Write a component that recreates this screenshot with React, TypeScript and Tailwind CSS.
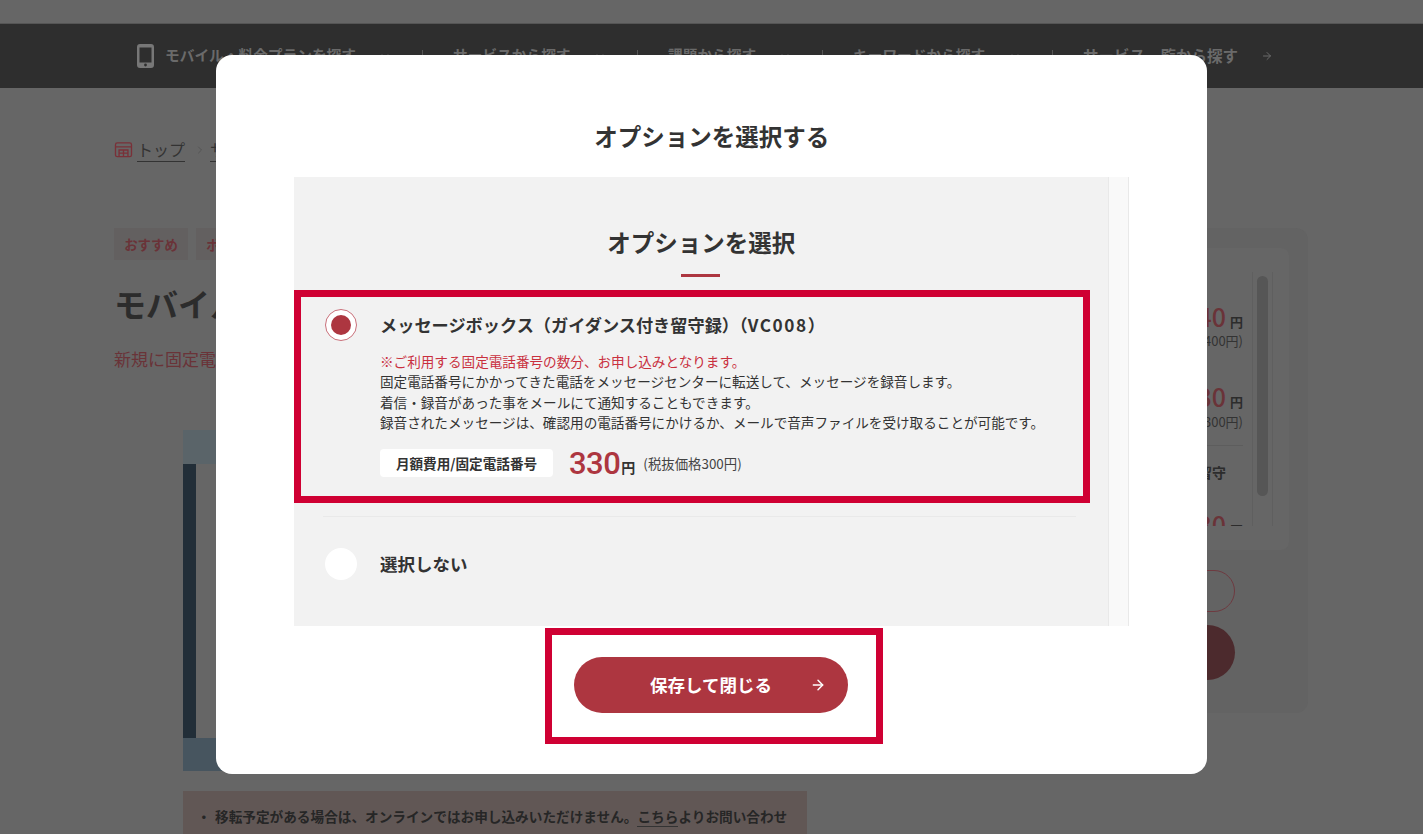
import React from "react";
import { ArrowRight, ChevronDown, ChevronRight } from "lucide-react";

const FONT = { fontFamily: '"Noto Sans CJK JP", "Noto Sans", sans-serif' };

const navItems = [
  { label: "モバイル・料金プランを探す", w: "w-[191px]" },
  { label: "サービスから探す", w: "w-[118px]" },
  { label: "課題から探す", w: "w-[88px]" },
  { label: "キーワードから探す", w: "w-[133px]" },
];

function BackgroundPage() {
  return (
    <div className="h-[834px] overflow-hidden bg-[#666666]">
      <div className="h-6 border-b border-[#555555]" />
      <nav className="flex h-16 items-center bg-[#2e2e2e] pl-[137px] pb-[1px] text-[14.7px] font-bold text-[#6a6a6a]">
        <svg viewBox="0 0 17 24" className="mr-[11px] h-6 w-[17px] text-[#777777]" fill="currentColor">
          <path
            fillRule="evenodd"
            d="M3 0h11a3 3 0 0 1 3 3v18a3 3 0 0 1-3 3H3a3 3 0 0 1-3-3V3a3 3 0 0 1 3-3zM2.5 3.5v15h12v-15zM8.5 19.6a1.4 1.4 0 1 0 0 2.8 1.4 1.4 0 0 0 0-2.8z"
          />
        </svg>
        {navItems.map((item) => (
          <React.Fragment key={item.label}>
            <span className={`${item.w} whitespace-nowrap`}>{item.label}</span>
            <ChevronDown className="ml-[23px] h-3 w-3 text-[#555555]" />
            <span className="ml-[31px] mr-[30px] h-3 w-px bg-[#555555]" />
          </React.Fragment>
        ))}
        <span className="w-[155px] whitespace-nowrap text-[15.5px]">サービス一覧から探す</span>
        <ArrowRight className="ml-[23px] h-3 w-3 text-[#6a6a6a]" />
      </nav>

      <div className="flex items-start justify-between pl-[114px] pr-[115px]">
        <div className="w-[693px]">
          <div className="mt-[50px] flex h-6 items-center text-[16px] text-[#333333]">
            <svg viewBox="0 0 20 18" className="mr-[4px] h-4 w-[19px] text-[#7a3038]" fill="none" stroke="currentColor" strokeWidth="1.5">
              <rect x="1" y="1" width="18" height="15.5" rx="2" />
              <path d="M1 5.5h18M5 16.5V9h10v7.5M10 9v7.5M5 12.5h10" />
            </svg>
            <span className="border-b border-[#333333] leading-[23px]">トップ</span>
            <ChevronRight className="ml-[9px] h-3 w-3 text-[#555555]" />
            <span className="ml-[4px] border-b border-[#333333] leading-[23px]">サービス</span>
          </div>

          <div className="mt-[66px] flex gap-2 text-[13.4px] font-bold text-[#6a3338]">
            <span className="flex h-8 w-[74px] items-center justify-center bg-[#636060]">おすすめ</span>
            <span className="flex h-8 w-[74px] items-center justify-center bg-[#636060]">ポイント</span>
          </div>

          <h1 className="mt-[21px] text-[32px] font-bold leading-[44px] text-[#2c2c2c]">モバイル</h1>
          <p className="mt-[22px] text-[17px] leading-6 text-[#6a3338]">新規に固定電話番号</p>

          <div className="ml-[69px] mt-[59px] flex h-[341px] w-[624px] flex-col bg-[#47555f]">
            <div className="h-[34px] bg-[#5a6469]" />
            <div className="flex-1 border-l-[13px] border-[#222e38] bg-[#666666]" />
            <div className="h-[33px]" />
          </div>

          <div className="ml-[69px] mt-[20px] flex h-[60px] w-[624px] bg-[#615755] pl-[14px] pt-[13px] text-[13.65px] font-bold leading-[24px] text-[#262626]">
            <span className="w-[18px] shrink-0">・</span>
            <p className="whitespace-nowrap">
              移転予定がある場合は、オンラインではお申し込みいただけません。
              <span className="border-b border-[#333333]">こちら</span>よりお問い合わせ
            </p>
          </div>
        </div>

        <aside className="mt-[140px] h-[485px] w-[300px] rounded-xl bg-[#636363] pr-[19px] pt-[20px]">
          <div className="flex h-[302px] justify-end rounded-lg bg-[#666666] pr-[16px] pt-[24px]">
            <div className="h-[254px] w-[170px] overflow-hidden pr-[9px] text-right text-[#333333]">
              <p className="mt-[28px] text-[25px] font-medium leading-8 text-[#6a3338]">
                1,540<span className="ml-[4px] text-[13px] font-bold text-[#2c2c2c]">円</span>
              </p>
              <p className="-mt-[7px] text-[13px] leading-5">(税抜価格1,400円)</p>
              <p className="mt-[29px] text-[25px] font-medium leading-8 text-[#6a3338]">
                1,430<span className="ml-[4px] text-[13px] font-bold text-[#2c2c2c]">円</span>
              </p>
              <p className="-mt-[6px] text-[13px] leading-5">(税抜価格1,300円)</p>
              <div className="mt-[13px] border-t border-[#5d5d5d] pt-[16px] pr-[17px] text-[14px] font-bold leading-5 text-[#2c2c2c]">
                付き留守
              </div>
              <p className="mt-[26px] text-[25px] font-medium leading-8 text-[#6a3338]">
                330<span className="ml-[4px] text-[13px] font-bold text-[#2c2c2c]">円</span>
              </p>
            </div>
            <div className="h-[254px] w-[21px] border-x border-[#5f5f5f] px-[4px] pt-[4px]">
              <div className="h-[220px] rounded-full bg-[#565656]" />
            </div>
          </div>
          <div className="ml-auto mr-[54px] mt-[20px] h-[42px] w-[200px] rounded-full border border-[#6e3a40]" />
          <div className="ml-auto mr-[54px] mt-[13px] h-[55px] w-[200px] rounded-full bg-[#4c2a2d]" />
        </aside>
      </div>
    </div>
  );
}

function Radio({ checked }: { checked?: boolean }) {
  return (
    <span
      className={`flex h-8 w-8 shrink-0 items-center justify-center rounded-full bg-white ${
        checked ? "border border-[#c9707a]" : ""
      }`}
    >
      {checked && <span className="h-5 w-5 rounded-full bg-[#ad3640]" />}
    </span>
  );
}

function OptionModal() {
  return (
    <div className="absolute left-[216px] top-[55px] flex h-[719px] w-[991.4px] flex-col rounded-2xl bg-white">
      <h2 className="flex h-[122px] items-end justify-center pb-[23px] text-[23.5px] font-bold leading-[36px] text-[#333333]">
        オプションを選択する
      </h2>

      <div className="mx-[78px] flex h-[449px]">
        <div className="flex-1 bg-[#f2f2f2] pr-[18px]">
          <h3 className="mt-[47px] pl-[18px] text-center text-[23.5px] font-bold leading-[36px] text-[#333333]">
            オプションを選択
          </h3>
          <div className="ml-[387px] mt-[14px] h-[3px] w-[39px] bg-[#ad3640]" />

          <label className="mt-[13px] flex h-[213px] gap-[23px] border-[7px] border-[#cf0033] pl-6 pt-3">
            <Radio checked />
            <div className="min-w-0 flex-1">
              <p className="text-[17.2px] font-bold leading-8 text-[#333333]">
                メッセージボックス（ガイダンス付き留守録）（
                <span className="tracking-[1.6px]">VC008</span>）
              </p>
              <div className="mt-[10px] text-[13.6px] leading-[20.3px] text-[#333333]">
                <p className="text-[#c9303e]">※ご利用する固定電話番号の数分、お申し込みとなります。</p>
                <p>固定電話番号にかかってきた電話をメッセージセンターに転送して、メッセージを録音します。</p>
                <p>着信・録音があった事をメールにて通知することもできます。</p>
                <p>録音されたメッセージは、確認用の電話番号にかけるか、メールで音声ファイルを受け取ることが可能です。</p>
              </div>
              <div className="mt-[17px] flex h-7 items-center">
                <span className="flex h-7 w-[173px] items-center justify-center rounded bg-white text-[13.6px] font-bold text-[#333333]">
                  月額費用/固定電話番号
                </span>
                <span className="mt-[2px] ml-[16px] font-['Roboto',sans-serif] text-[31px] font-medium tracking-[-0.5px] text-[#ad3640]">
                  330
                </span>
                <span className="ml-[1px] mt-[9px] text-[14px] font-bold text-[#333333]">円</span>
                <span className="ml-[8px] text-[13.4px] text-[#444444]">(税抜価格300円)</span>
              </div>
            </div>
          </label>

          <div className="ml-[29px] mr-[14px] mt-[13px] h-px bg-[#e9e9e9]" />

          <label className="mt-[31px] flex items-center gap-[23px] pl-[31px]">
            <Radio />
            <span className="text-[17.5px] font-bold text-[#333333]">選択しない</span>
          </label>
        </div>
        <div className="w-[21px] border-x border-[#e9e9e9] bg-[#f9f9f9]" />
      </div>

      <div className="ml-[329px] mt-[2px] h-[116px] w-[338px] border-[7px] border-[#cf0033] pl-[22px] pt-[22px]">
        <button className="relative flex h-14 w-[274px] items-center justify-center rounded-full bg-[#ad3640] text-[17.5px] font-bold text-white">
          保存して閉じる
          <ArrowRight className="absolute right-[22px] h-4 w-4" strokeWidth={2.2} />
        </button>
      </div>
    </div>
  );
}

export default function App() {
  return (
    <div className="relative h-[834px] overflow-hidden" style={FONT}>
      <BackgroundPage />
      <OptionModal />
    </div>
  );
}
